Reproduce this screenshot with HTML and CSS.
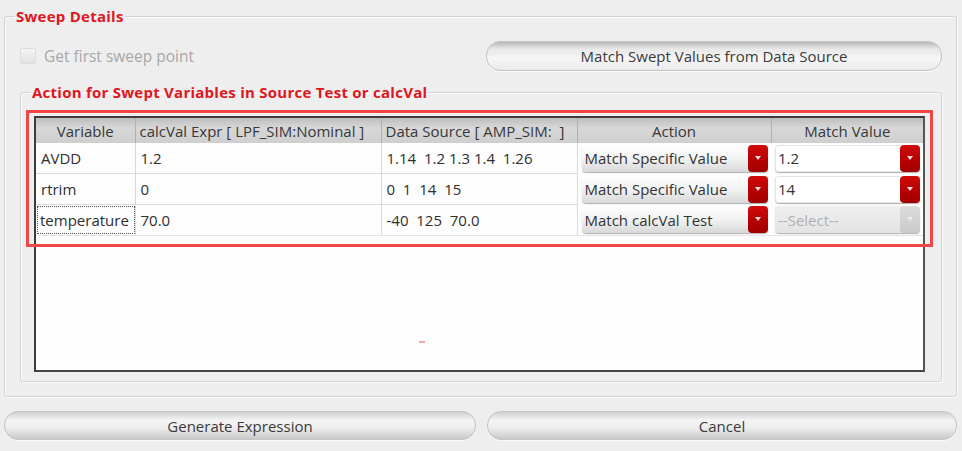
FILE: index.html
```html
<!DOCTYPE html>
<html>
<head>
<meta charset="utf-8">
<link rel="stylesheet" href="styles.css">
</head>
<body>
<fieldset class="group outer">
  <legend class="group-title">Sweep Details</legend>
  <div class="top-row">
    <label class="check">
      <span class="box"></span>
      <span class="check-text">Get first sweep point</span>
    </label>
    <button class="btn btn-match">Match Swept Values from Data Source</button>
  </div>
  <fieldset class="group inner">
    <legend class="group-title">Action for Swept Variables in Source Test or calcVal</legend>
    <div class="table-wrap">
      <div class="grid">
        <table>
          <colgroup>
            <col class="c1"><col class="c2"><col class="c3"><col class="c4"><col class="c5">
          </colgroup>
          <thead>
            <tr><th>Variable</th><th>calcVal Expr [ LPF_SIM:Nominal ]</th><th>Data Source [ AMP_SIM:&nbsp; ]</th><th>Action</th><th>Match Value</th></tr>
          </thead>
          <tbody>
            <tr>
              <td>AVDD</td><td>1.2</td><td>1.14&nbsp; 1.2 1.3 1.4&nbsp; 1.26</td>
              <td class="combo-cell"><div class="combo"><span class="combo-text">Match Specific Value</span><span class="arrow"></span></div></td>
              <td class="combo-cell"><div class="combo edit"><span class="combo-text">1.2</span><span class="arrow"></span></div></td>
            </tr>
            <tr>
              <td>rtrim</td><td>0</td><td>0&nbsp; 1&nbsp; 14&nbsp; 15</td>
              <td class="combo-cell"><div class="combo"><span class="combo-text">Match Specific Value</span><span class="arrow"></span></div></td>
              <td class="combo-cell"><div class="combo edit"><span class="combo-text">14</span><span class="arrow"></span></div></td>
            </tr>
            <tr>
              <td class="focus"><span>temperature</span></td><td>70.0</td><td>-40&nbsp; 125&nbsp; 70.0</td>
              <td class="combo-cell"><div class="combo"><span class="combo-text">Match calcVal Test</span><span class="arrow"></span></div></td>
              <td class="combo-cell"><div class="combo disabled"><span class="combo-text">--Select--</span><span class="arrow"></span></div></td>
            </tr>
          </tbody>
        </table>
        <div class="empty"><span class="speck"></span></div>
      </div>
      <div class="highlight"></div>
    </div>
  </fieldset>
</fieldset>
<div class="bottom-row">
  <button class="btn btn-bottom">Generate Expression</button>
  <button class="btn btn-bottom">Cancel</button>
</div>
</body>
</html>
```

FILE: styles.css
```css
html, body {
  margin: 0;
  padding: 0;
}
body {
  background: #eeeeee;
  font-family: "Open Sans", "Noto Sans", sans-serif;
  font-size: 15px;
  color: #2f2f2f;
  width: 962px;
  height: 451px;
  overflow: hidden;
  padding: 7px 5px 0 4px;
  box-sizing: border-box;
}
.group {
  border: 1px solid #d2d2d2;
  border-radius: 3px;
  box-shadow: inset 1px 1px 0 #fafafa, 1px 1px 0 #fafafa;
  margin: 0;
  min-width: 0;
}
.group-title {
  color: #e0161e;
  font-weight: 700;
  font-size: 15px;
  line-height: 18px;
  padding: 0 1px;
  letter-spacing: 0.25px;
}
.outer {
  padding: 16px 13px 14px 14px;
}
.outer > .group-title {
  margin-left: -4px;
}
.top-row {
  display: flex;
  align-items: center;
  height: 30px;
}
.check {
  flex: 1;
  display: flex;
  align-items: center;
  gap: 8px;
  padding-left: 1px;
}
.box {
  width: 14px;
  height: 14px;
  border: 1px solid #dcdcdc;
  border-radius: 2px;
  background: linear-gradient(#f4f4f4, #e2e2e2);
}
.check-text {
  color: #a8a8a8;
  font-size: 15.5px;
}
.btn {
  font-family: "Open Sans", "Noto Sans", sans-serif;
  font-size: 15px;
  color: #3a3a3a;
  border: 1px solid #c4c4c4;
  border-radius: 14px;
  background: linear-gradient(#cfcfcf 0%, #f4f4f4 30%, #ececec 60%, #c9c9c9 100%);
  box-shadow: 0 1px 0 #fbfbfb;
  padding: 0;
  cursor: default;
}
.btn-match {
  width: 456px;
  height: 30px;
  margin-right: 1px;
  background: linear-gradient(#b9b9b9 0%, #e8e8e8 25%, #f6f6f6 60%, #eaeaea 100%);
}
.inner {
  margin: 12px 1px 0 1px;
  padding: 15px 16px 9px 13px;
}
.inner > .group-title {
  margin-left: -3px;
}
.table-wrap {
  position: relative;
}
.grid {
  border: 2px solid #3c3c3c;
  border-right-color: #555;
  border-bottom-color: #444;
  background: #fdfdfd;
  height: 252px;
  display: flex;
  flex-direction: column;
}
table {
  border-collapse: collapse;
  table-layout: fixed;
  width: 887px;
}
col.c1 { width: 99px; }
col.c2 { width: 246px; }
col.c3 { width: 196px; }
col.c4 { width: 194px; }
col.c5 { width: 152px; }
th {
  height: 25px;
  padding: 0;
  font-weight: 400;
  color: #383838;
  background: linear-gradient(#bdbdbd, #d8d8d8 40%, #cecece 100%);
  border-right: 1px solid #b0b0b0;
  border-left: 1px solid #e6e6e6;
  text-align: center;
  white-space: nowrap;
  overflow: hidden;
}
th:nth-child(2), th:nth-child(3) {
  text-align: left;
  padding-left: 4px;
}
th:first-child { border-left: none; }
th:last-child { border-right: none; }
td {
  height: 30px;
  padding: 0 0 0 5px;
  border-right: 1px solid #d9d9d9;
  border-bottom: 1px solid #d9d9d9;
  white-space: nowrap;
  overflow: hidden;
}
td:last-child { border-right: none; }
tbody tr:last-child td { border-bottom: 1px solid #e4e4e4; }
td.focus {
  padding: 0 0 0 1px;
}
td.focus span {
  display: block;
  height: 26px;
  line-height: 26px;
  padding-left: 2px;
  border: 1px dotted #555;
  overflow: hidden;
}
td.combo-cell {
  padding: 0 3px 0 4px;
  border-right: none;
  border-bottom: none;
}
.combo {
  height: 27px;
  display: flex;
  align-items: stretch;
  border-radius: 4px;
  background: linear-gradient(#ffffff, #f2f2f2 50%, #d8d8d8 100%);
  box-shadow: 0 1px 1px #b0b0b0;
}
.combo-text {
  flex: 1;
  display: flex;
  align-items: center;
  padding-left: 3px;
  font-size: 15px;
  color: #333;
  overflow: hidden;
}
.arrow {
  width: 20px;
  flex: 0 0 20px;
  border-radius: 4px;
  background: linear-gradient(#d20a0a, #b40000 60%, #a00000);
  position: relative;
}
.arrow::after {
  content: "";
  position: absolute;
  left: 7px;
  top: 11px;
  border-left: 3.5px solid transparent;
  border-right: 3.5px solid transparent;
  border-top: 4px solid #f4dede;
}
.combo.edit {
  background: #ffffff;
}
.combo.edit .combo-text {
  border: 1px solid #e4e4e4;
  border-right: none;
  border-radius: 4px 0 0 4px;
  padding-left: 2px;
}
.combo.disabled {
  background: linear-gradient(#eeeeee, #e4e4e4);
}
.combo.disabled .combo-text {
  color: #b0b0b0;
}
.combo.disabled .arrow {
  background: linear-gradient(#dcdcdc, #cacaca);
}
.combo.disabled .arrow::after {
  border-top-color: #eeeeee;
}
.empty {
  flex: 1;
  position: relative;
}
.speck {
  position: absolute;
  left: 383px;
  top: 105px;
  width: 6px;
  height: 2px;
  background: #f6a3a8;
}
.highlight {
  position: absolute;
  left: -8px;
  top: -6px;
  width: 901px;
  height: 131px;
  border: 3px solid #f44646;
  pointer-events: none;
}
.bottom-row {
  display: flex;
  gap: 11px;
  margin-top: 14px;
}
.btn-bottom {
  height: 29px;
  flex: 0 0 auto;
}
.btn-bottom:first-child { width: 472px; }
.btn-bottom:last-child { width: 470px; }
```
